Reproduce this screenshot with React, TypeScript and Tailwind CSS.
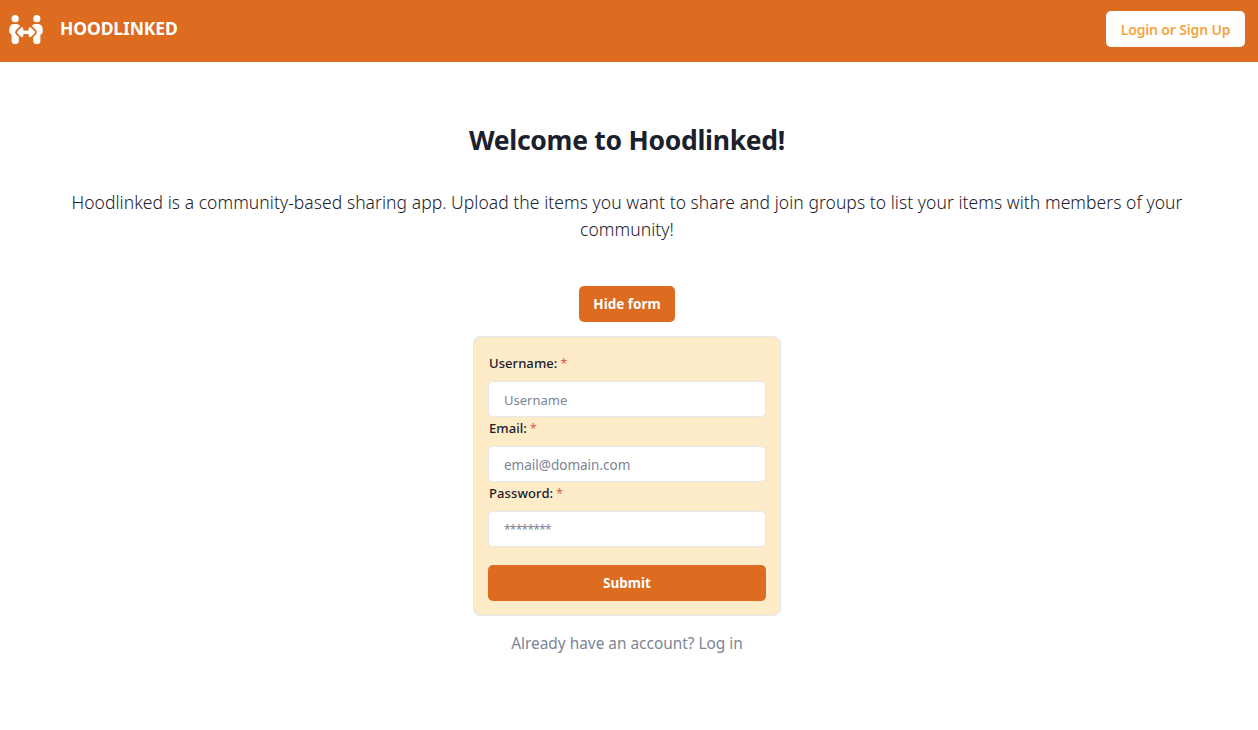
import React from "react";
import { FaPeopleArrows } from "react-icons/fa6";

type FieldProps = {
  id: string;
  label: string;
  type: string;
  placeholder: string;
  labelClass: string;
  inputClass: string;
};

function Field({ id, label, type, placeholder, labelClass, inputClass }: FieldProps) {
  return (
    <div className="flex flex-col">
      <label htmlFor={id} className={`flex pl-px text-[13px] leading-[21px] font-medium text-[#1a202c] ${labelClass}`}>
        {label}
        <span className="ml-[3px] text-[12px] leading-[21px] font-normal text-[#e05a50]">*</span>
      </label>
      <input
        id={id}
        type={type}
        placeholder={placeholder}
        className={`h-9 w-full rounded-[5px] border border-[#e2e8f0] bg-white px-[15px] pt-px text-[#1a202c] outline-none placeholder:text-[#7b8496] placeholder:opacity-100 ${inputClass}`}
      />
    </div>
  );
}

export default function App() {
  return (
    <div className="flex min-h-screen flex-col bg-white font-['Noto_Sans','Open_Sans',sans-serif] text-[#1a202c]">
      <header className="flex h-[62px] items-center justify-between bg-[#dd6b20] pr-[13px] pl-2">
        <div className="flex items-center gap-4 pb-[4px] text-white">
          <FaPeopleArrows size={36} className="mt-px h-[29px] w-[36px]" />
          <span className="pb-[2px] text-[17.5px] leading-[27px] font-bold tracking-[-0.13px]">HOODLINKED</span>
        </div>
        <button className="mb-1 h-9 w-[139px] rounded-[5px] bg-white text-[14px] font-semibold tracking-[-0.16px] text-[#f6a43f]">
          Login or Sign Up
        </button>
      </header>

      <main className="flex w-[1254px] flex-col items-center pt-[60px]">
        <h1 className="text-[26.5px] leading-9 font-bold tracking-[-0.28px]">Welcome to Hoodlinked!</h1>
        <p className="mt-[31px] w-[1130px] text-center text-[17.5px] leading-[27px] font-light tracking-[0.047px]">
          Hoodlinked is a community-based sharing app. Upload the items you want to share and join groups to list your
          items with members of your community!
        </p>
        <button className="mt-[43px] h-9 w-24 rounded-[5px] bg-[#dd6b20] text-[13.5px] font-bold text-white">
          Hide form
        </button>

        <form className="mt-[14px] flex h-[280px] w-[308px] flex-col rounded-[7px] border border-[#e2e8f0] bg-[#feebc8] p-[14px]">
          <Field
            id="username"
            label="Username:"
            type="text"
            placeholder="Username"
            labelClass="h-[30px] pt-[2px] tracking-[0.07px]"
            inputClass="text-[13px]"
          />
          <Field
            id="email"
            label="Email:"
            type="email"
            placeholder="email@domain.com"
            labelClass="h-[29px] pt-px tracking-[0.07px]"
            inputClass="text-[13.5px]"
          />
          <Field
            id="password"
            label="Password:"
            type="password"
            placeholder="********"
            labelClass="h-[29px] pt-px tracking-[0.1px]"
            inputClass="text-[12px] tracking-[-0.75px]"
          />
          <button
            type="button"
            className="mt-[18px] h-9 w-full rounded-[5px] bg-[#dd6b20] text-[13.5px] font-bold text-white"
          >
            Submit
          </button>
        </form>

        <p className="mt-4 text-[15.4px] leading-6 text-[#7b8496]">Already have an account? Log in</p>
      </main>
    </div>
  );
}
